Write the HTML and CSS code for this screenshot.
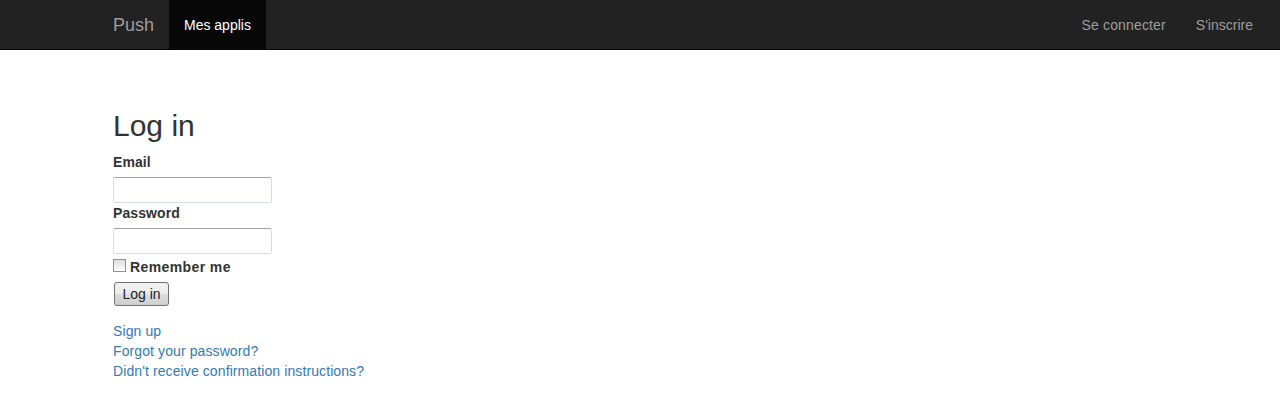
FILE: index.html
```html
<!DOCTYPE html>
<html>
<head>
<meta charset="utf-8">
<title>Push</title>
<link rel="stylesheet" href="styles.css">
</head>
<body>
<nav class="navbar">
  <div class="nav-inner">
    <a class="brand" href="#">Push</a>
    <ul class="nav">
      <li class="active"><a href="#">Mes applis</a></li>
    </ul>
    <ul class="nav nav-right">
      <li><a href="#">Se connecter</a></li>
      <li><a href="#">S'inscrire</a></li>
    </ul>
  </div>
</nav>
<main class="container">
  <h2 class="title">Log in</h2>
  <form class="login">
    <div class="field">
      <label class="lbl" for="email">Email</label>
      <input class="text-input" id="email" type="email">
    </div>
    <div class="field">
      <label class="lbl" for="pw">Password</label>
      <input class="text-input" id="pw" type="password">
    </div>
    <div class="check-row">
      <span class="checkbox"></span>
      <label class="lbl-inline">Remember me</label>
    </div>
    <div class="actions">
      <button class="btn" type="button">Log in</button>
    </div>
  </form>
  <div class="links">
    <a href="#">Sign up</a>
    <a href="#">Forgot your password?</a>
    <a href="#">Didn't receive confirmation instructions?</a>
  </div>
</main>
</body>
</html>
```
FILE: styles.css
```css
* { box-sizing: border-box; }
html, body { margin: 0; padding: 0; }
body {
  font-family: "Liberation Sans", Arial, Helvetica, sans-serif;
  font-size: 14px;
  line-height: 20px;
  color: #333;
  background: #fff;
}
a { text-decoration: none; }

.navbar {
  background: #222;
  border-bottom: 1px solid #080808;
  height: 50px;
}
.nav-inner {
  display: flex;
  align-items: stretch;
  height: 49px;
  padding-left: 98px;
  padding-right: 12px;
}
.brand {
  color: #9d9d9d;
  font-size: 18px;
  line-height: 20px;
  padding: 15px 15px 14px 15px;
  display: flex;
  align-items: center;
  width: 71px;
}
.nav {
  list-style: none;
  margin: 0;
  padding: 0;
  display: flex;
}
.nav li { display: flex; }
.nav a {
  color: #9d9d9d;
  padding: 0 15px;
  display: flex;
  align-items: center;
}
.nav .active a {
  background: #080808;
  color: #fff;
}
.nav-right { margin-left: auto; }
.nav-right li:first-child a { padding-right: 15px; letter-spacing: 0.15px; }

.container {
  padding: 59px 0 0 113px;
}
.title {
  font-size: 30px;
  font-weight: 500;
  line-height: 33px;
  margin: 0 0 10px 0;
}
.login { margin: 0; }
.field {
  display: flex;
  flex-direction: column;
  align-items: flex-start;
}
.lbl {
  font-weight: bold;
  display: block;
  margin: 0 0 5px 0;
  height: 20px;
  letter-spacing: 0.1px;
}
.text-input {
  width: 159px;
  height: 26px;
  border: 1px solid #d9dce3;
  border-top-color: #a3a3a3;
  border-radius: 2px;
  padding: 2px 3px;
  font-family: inherit;
  font-size: 13px;
  margin: 0;
  background: #fff;
}
.check-row {
  display: flex;
  align-items: center;
  height: 24px;
}
.checkbox {
  width: 13px;
  height: 13px;
  border: 1px solid #8f8f9d;
  background: linear-gradient(#dcdcdc, #fdfdfd);
  margin-right: 4px;
  margin-bottom: 1px;
}
.lbl-inline { font-weight: bold; font-size: 14px; margin-top: 1px; letter-spacing: 0.4px; }
.actions {
  padding-top: 4px;
  padding-left: 1px;
}
.btn {
  width: 55px;
  height: 24px;
  font-family: inherit;
  font-size: 14px;
  color: #222;
  border: 1px solid #707070;
  border-radius: 3px;
  background: linear-gradient(#f2f2f2 0%, #ebebeb 50%, #dddddd 51%, #cfcfcf 100%);
  padding: 0;
  margin: 0;
}
.links {
  display: flex;
  flex-direction: column;
  align-items: flex-start;
  margin-top: 15px;
}
.links a { color: #337ab7; line-height: 20px; letter-spacing: 0.1px; }
```
